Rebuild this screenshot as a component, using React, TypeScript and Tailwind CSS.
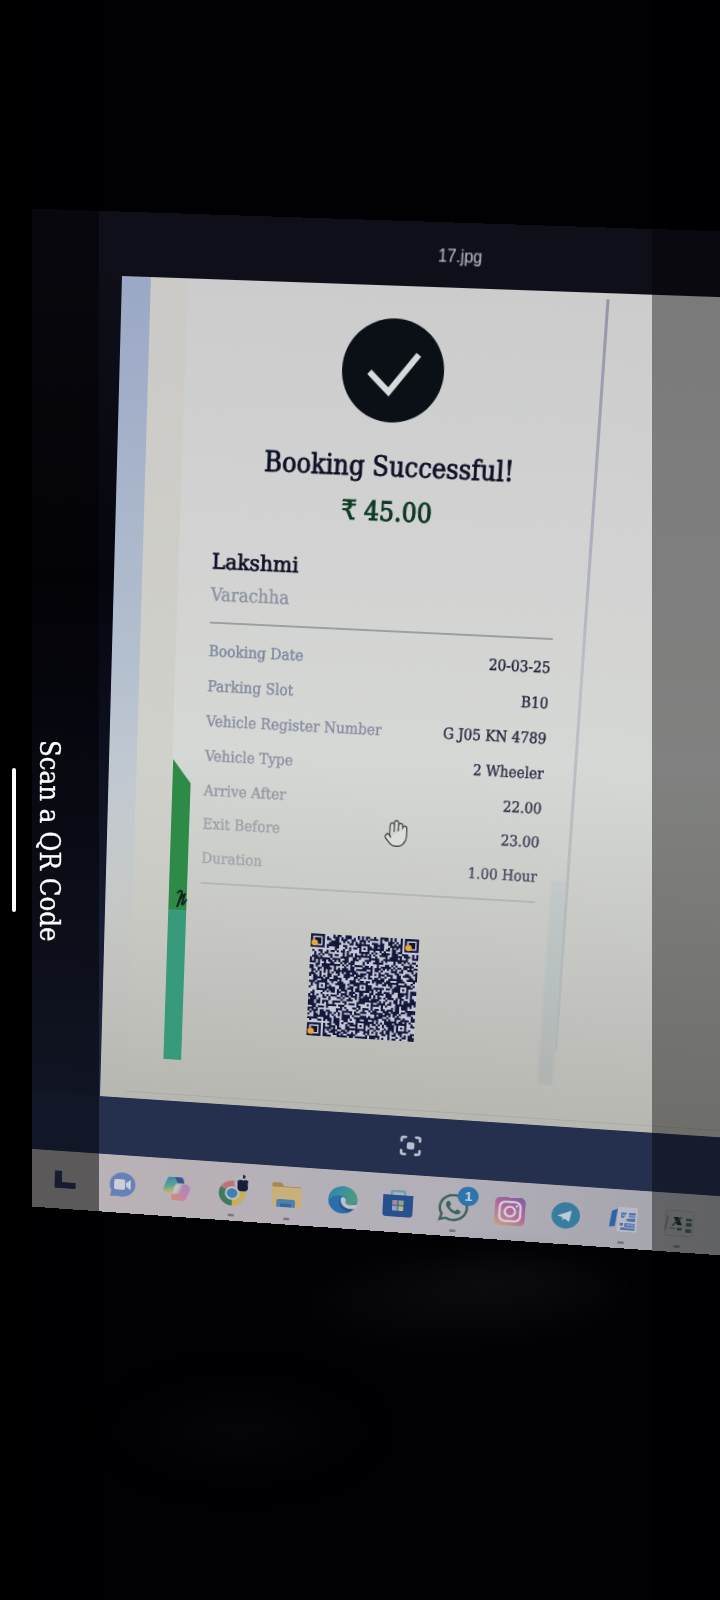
import React from "react";
import { Hand, Scan } from "lucide-react";
import { FaWhatsapp } from "react-icons/fa";

type Point = [number, number];

/* Where the corners of the picture shown on the laptop land in the camera view. */
const CORNERS: [Point, Point, Point, Point] = [
  [122, 276],
  [609, 293.2],
  [551, 1126],
  [100, 1096],
];

/* CSS matrix that carries a width x height rectangle, whose top left is at (ox, oy), onto four corners. */
function project(c: [Point, Point, Point, Point], width: number, height: number, ox: number, oy: number) {
  const [p0, p1, p2, p3] = c;
  const dx1 = p1[0] - p2[0];
  const dx2 = p3[0] - p2[0];
  const dy1 = p1[1] - p2[1];
  const dy2 = p3[1] - p2[1];
  const sx = p0[0] - p1[0] + p2[0] - p3[0];
  const sy = p0[1] - p1[1] + p2[1] - p3[1];
  const den = dx1 * dy2 - dx2 * dy1;
  const g0 = (sx * dy2 - dx2 * sy) / den;
  const h0 = (dx1 * sy - sx * dy1) / den;
  const a = (p1[0] - p0[0] + g0 * p1[0]) / width;
  const b = (p3[0] - p0[0] + h0 * p3[0]) / height;
  const d = (p1[1] - p0[1] + g0 * p1[1]) / width;
  const e = (p3[1] - p0[1] + h0 * p3[1]) / height;
  const g = g0 / width;
  const h = h0 / height;
  const c2 = p0[0] - a * ox - b * oy;
  const f2 = p0[1] - d * ox - e * oy;
  const i2 = 1 - g * ox - h * oy;
  const m = [a, d, 0, g, b, e, 0, h, 0, 0, 1, 0, c2, f2, 0, i2].map((v) => v / i2);
  m[10] = 1;
  return `matrix3d(${m.map((v) => v.toFixed(8)).join(",")})`;
}

const DETAILS = [
  { label: "Booking Date", value: "20-03-25", tone: "text-[#7b849c]", ink: "text-[#1d2137]" },
  { label: "Parking Slot", value: "B10", tone: "text-[#80889d]", ink: "text-[#20243c]" },
  { label: "Vehicle Register Number", value: "G J05 KN 4789", tone: "text-[#868da0]", ink: "text-[#252a42]" },
  { label: "Vehicle Type", value: "2 Wheeler", tone: "text-[#8b91a2]", ink: "text-[#2c3148]" },
  { label: "Arrive After", value: "22.00", tone: "text-[#9498a3]", ink: "text-[#31374e]" },
  { label: "Exit Before", value: "23.00", tone: "text-[#9c9fa7]", ink: "text-[#384059]" },
  { label: "Duration", value: "1.00 Hour", tone: "text-[#a1a3aa]", ink: "text-[#474d61]" },
];

const N = 53;

function qrPath() {
  let seed = 20325;
  const rnd = () => {
    seed = (seed * 1103515245 + 12345) % 2147483648;
    return seed / 2147483648;
  };
  const marks: Point[] = [[26, 6], [6, 26], [26, 26], [46, 26], [26, 46], [46, 46]];
  let out = "";
  for (let y = 0; y < N; y++) {
    for (let x = 0; x < N; x++) {
      let on = rnd() < 0.53;
      if ((x < 8 && y < 8) || (x > N - 9 && y < 8) || (x < 8 && y > N - 9)) on = false;
      for (const [mx, my] of marks) {
        const r = Math.max(Math.abs(x - mx), Math.abs(y - my));
        if (r <= 2) on = r !== 1;
      }
      if (on) out += `M${x} ${y}h1.05v1.05h-1.05z`;
    }
  }
  return out;
}

const QR = qrPath();

function QrCode() {
  const finders: Point[] = [[0, 0], [N - 7, 0], [0, N - 7]];
  return (
    <svg viewBox="0 0 53 53" className="size-[113px] blur-[.6px]">
      <rect width="53" height="53" fill="#c6c9d6" />
      <path d={QR} fill="#14163a" />
      {finders.map(([x, y]) => (
        <g key={`${x}-${y}`}>
          <rect x={x + 0.6} y={y + 0.6} width="5.8" height="5.8" fill="#c6c9d6" stroke="#14163a" strokeWidth="1.1" />
          <rect x={x + 2} y={y + 1.9} width="3.2" height="3.2" fill="#0e1130" />
          <circle cx={x + 2} cy={y + 4.6} r="1.6" fill="#e9a92e" />
        </g>
      ))}
    </svg>
  );
}

function TaskIcon({ children, open = false }: { children: React.ReactNode; open?: boolean }) {
  return (
    <div className="relative flex h-full w-[59.4px] shrink-0 items-center justify-center">
      <div className="blur-[.6px]">{children}</div>
      {open && <span className="absolute bottom-[5px] h-[3px] w-[7px] rounded-full bg-[#77757f]" />}
    </div>
  );
}

function Taskbar() {
  return (
    <div className="flex h-[67px] bg-linear-to-r from-[#b9b2b6] from-20% via-[#b2afb8] via-60% to-[#9c9fa6] pl-[138px]">
      <TaskIcon>
        <svg viewBox="0 0 32 32" className="size-8">
          <path d="M1 5h8v13h15v7H1z" fill="#2f3b5c" />
        </svg>
      </TaskIcon>
      <TaskIcon>
        <svg viewBox="0 0 32 32" className="size-8">
          <path d="M16 2a14 14 0 1 1-4 27.400l-9 .6 1-7A14 14 0 0 1 16 2z" fill="#6680b8" />
          <rect x="7" y="10" width="12" height="12" rx="2" fill="#cfced6" />
          <path d="M20 14l5-4v12l-5-4z" fill="#cfced6" />
        </svg>
      </TaskIcon>
      <TaskIcon>
        <svg viewBox="0 0 32 32" className="size-8">
          <defs>
            <linearGradient id="cpA" x1="0" y1="0" x2="0.3" y2="1">
              <stop offset="0" stopColor="#3a7eae" />
              <stop offset="0.55" stopColor="#56a593" />
              <stop offset="1" stopColor="#c9ba66" />
            </linearGradient>
            <linearGradient id="cpB" x1="1" y1="0" x2="0.2" y2="1">
              <stop offset="0" stopColor="#a487c2" />
              <stop offset="0.6" stopColor="#c583a8" />
              <stop offset="1" stopColor="#d08c78" />
            </linearGradient>
          </defs>
          <path d="M9 3h11c2 0 3 2 3.500 4l.500 3h-6c-3 0-4 2-5 5l-2 7H6c-4 0-5-4-4-7l3-8c.8-2.500 2-4 4-4z" fill="url(#cpA)" />
          <path d="M14 3h6c2 0 3 2 3.500 4l.500 3h-7z" fill="#34568f" />
          <path d="M23 30H12c-2 0-2-4-1.500-7H15c3 0 4-2 5-5l2-7h4c4 0 5 4 4 7l-3 8c-.8 2.500-2 4-4 4z" fill="url(#cpB)" />
          <path d="M14 13l5-2-3 9-4 2z" fill="#c7c0cf" />
        </svg>
      </TaskIcon>
      <TaskIcon open>
        <svg viewBox="0 0 32 32" className="size-8 overflow-visible">
          <path d="M16 17L3.500 9.800A14.500 14.500 0 0 1 28.600 9.800z" fill="#bd737c" />
          <path d="M16 17L3.500 9.800A14.500 14.500 0 0 0 16 31.500z" fill="#40795f" />
          <path d="M16 17L28.600 9.800A14.500 14.500 0 0 1 16 31.500z" fill="#c6af58" />
          <circle cx="16" cy="17" r="7.800" fill="#c6c3ce" />
          <circle cx="16" cy="17" r="5.800" fill="#3f7fb2" />
          <circle cx="27.500" cy="5" r="9.500" fill="#b8b4bb" />
          <path d="M21.500 2q5-2 6 0 2-2 5.500 0-1 4 0 9-2 4-6 3-4 1-5.500-3z" fill="#171c38" />
          <path d="M27-5l3 1-1 4-2-1z" fill="#22263a" />
        </svg>
      </TaskIcon>
      <TaskIcon open>
        <svg viewBox="0 0 32 32" className="size-8">
          <path d="M0 3q0-2 2-2h8l3 4h18v10H0z" fill="#a88a4e" />
          <path d="M0 6h30q2 0 2 2v21H0z" fill="#c9b07a" />
          <path d="M5 29v-7q0-2 2-2h16q2 0 2 2v7z" fill="#4a80b0" />
          <rect x="9" y="25" width="12" height="4" fill="#38699c" />
        </svg>
      </TaskIcon>
      <TaskIcon>
        <svg viewBox="0 0 32 32" className="size-8">
          <defs>
            <linearGradient id="edA" x1="0" y1="0" x2="1" y2="0.4">
              <stop offset="0" stopColor="#2f80ad" />
              <stop offset="0.5" stopColor="#3a929c" />
              <stop offset="1" stopColor="#4b9a7c" />
            </linearGradient>
          </defs>
          <circle cx="16" cy="16" r="15.500" fill="#2c6ea8" />
          <path d="M1 14C2 6 8 .5 16 .5S31.500 7 31.500 14c0 5-4 7.500-8 7.500-4 0-5-1.500-4-3 2-4-1-7.500-6-7.500-6 0-10 2-12.500 6z" fill="url(#edA)" />
          <path d="M12.500 15c0 7 6 11 17.500 8-2 4-5 6-8 7-6-2-12-8-9.500-15z" fill="#25598f" />
          <path d="M16 12.500c4 1 4 4 3 6 0 3 6 4 12.500 1.500l-1.500 5c-9 3-17-2-16-11z" fill="#c2c1cb" />
        </svg>
      </TaskIcon>
      <TaskIcon>
        <svg viewBox="0 0 32 32" className="size-8">
          <path d="M9 8V3.500Q9 1.500 11 1.500h10q2 0 2 2V8" fill="none" stroke="#67a0ad" strokeWidth="2.500" />
          <path d="M0 6h32v21q0 4-4 4H4q-4 0-4-4z" fill="#27508f" />
          <rect x="10" y="12" width="5.500" height="5.500" fill="#a98a8c" />
          <rect x="16.500" y="12" width="5.500" height="5.500" fill="#93a68b" />
          <rect x="10" y="18.500" width="5.500" height="5.500" fill="#86a9c6" />
          <rect x="16.500" y="18.500" width="5.500" height="5.500" fill="#c0b484" />
        </svg>
      </TaskIcon>
      <TaskIcon open>
        <div className="relative">
          <FaWhatsapp className="size-9 text-[#3c6458]" />
          <span className="absolute -top-[7px] -right-[8px] flex size-[22px] items-center justify-center rounded-full bg-[#2f74ac] font-['Liberation_Sans'] text-[15px] leading-none font-bold text-[#bfd3e6]">
            1
          </span>
        </div>
      </TaskIcon>
      <TaskIcon>
        <svg viewBox="0 0 32 32" className="size-8">
          <defs>
            <linearGradient id="ig" x1="0.8" y1="0" x2="0.2" y2="1">
              <stop offset="0" stopColor="#84609e" />
              <stop offset="0.5" stopColor="#b16a98" />
              <stop offset="1" stopColor="#c29c84" />
            </linearGradient>
          </defs>
          <rect width="32" height="32" rx="5" fill="url(#ig)" />
          <rect x="5" y="5" width="22" height="22" rx="6" fill="none" stroke="#d6cadb" strokeWidth="2.600" />
          <circle cx="16" cy="16" r="5.500" fill="none" stroke="#d6cadb" strokeWidth="2.600" />
          <circle cx="23" cy="9.500" r="1.300" fill="#d6cadb" />
        </svg>
      </TaskIcon>
      <TaskIcon>
        <svg viewBox="0 0 32 32" className="size-8">
          <circle cx="16" cy="16" r="15" fill="#387d9f" />
          <path d="M7 16.500l15-6.500-2 13-5.500-3.500-2 2.500v-4z" fill="#bccbd6" />
        </svg>
      </TaskIcon>
      <TaskIcon open>
        <svg viewBox="0 0 32 32" className="size-8">
          <rect x="10" y="2" width="21" height="28" rx="2" fill="#b7b9c4" />
          <path d="M4 7l6-3-2 20-6 1z" fill="#2f63a8" />
          <path d="M14 8h6l-3 6h-3zM22 8h7v5h-7zM19 15l10-1v4h-8zM13 20h4v3h-4zM18 20h11v8H14v-3h4z" fill="#5175ab" />
          <path d="M15 11h14M20 22h9M18 25h11" stroke="#a9b6cf" strokeWidth="1" />
        </svg>
      </TaskIcon>
      <TaskIcon open>
        <svg viewBox="0 0 32 32" className="size-8">
          <rect x="1.500" y="1.500" width="29" height="29" rx="3" fill="#a1a3a5" stroke="#909393" />
          <path d="M4 8L2 24M7 22h5" stroke="#747b7a" strokeWidth="1.500" />
          <path d="M10 9h5l4 9h-5z" fill="#173a30" />
          <path d="M18 9l-9 10" stroke="#35544b" strokeWidth="1.500" />
          <path d="M23 10h6v3h-6zM23 15h6v4h-6zM23 22h6v4h-6zM14 21h5v3h-5z" fill="#4c5d57" />
        </svg>
      </TaskIcon>
    </div>
  );
}

function Receipt() {
  return (
    <div className="flex h-[870px] w-[348px] flex-col font-['DejaVu_Serif_Condensed','DejaVu_Serif',serif] [font-stretch:condensed]">
      <svg viewBox="0 0 102 102" className="mt-8 mr-[2px] h-[103px] w-[101px] self-center" preserveAspectRatio="none">
        <circle cx="51" cy="51" r="51" fill="#0b1017" />
        <path d="M27.500 53l20 19L76 34.500" fill="none" stroke="#d6dadb" strokeWidth="6" />
      </svg>
      <h1 className="mt-[20px] h-[48px] self-center text-[27px] leading-[49px] whitespace-nowrap text-[#0e1026] [-webkit-text-stroke:.8px_#0e1026]">
        Booking Successful!
      </h1>
      <p className="h-[47px] scale-x-[.98] self-center text-[27px] leading-[43px] whitespace-nowrap text-[#0d3a25] [-webkit-text-stroke:1px_#0d3a25]">
        ₹ 45.00
      </p>
      <h2 className="mt-[16px] h-[36px] origin-left scale-x-[1.04] text-[22px] leading-[35px] text-[#0e1026] [-webkit-text-stroke:.7px_#0e1026]">
        Lakshmi
      </h2>
      <p className="h-[32px] origin-left scale-x-[.99] text-[19px] leading-[31px] text-[#8b93a0] [-webkit-text-stroke:.4px_#8b93a0]">
        Varachha
      </p>
      <hr className="mt-[12px] border-t-[2px] border-[#9a9fa2]" />
      <dl className="mt-[11px] flex flex-col text-[16px]">
        {DETAILS.map((row) => (
          <div key={row.label} className="flex h-[36.9px] justify-between leading-[36.9px] whitespace-nowrap">
            <dt className={`origin-left scale-x-[.985] [-webkit-text-stroke-width:.4px] ${row.tone}`}>{row.label}</dt>
            <dd className={`origin-right scale-x-[.96] [-webkit-text-stroke-width:.4px] ${row.ink}`}>{row.value}</dd>
          </div>
        ))}
      </dl>
      <hr className="mt-[7px] border-t-[2px] border-[#b3b6b5]" />
      <div className="mt-[47px] self-center">
        <QrCode />
      </div>
    </div>
  );
}

function LaptopScreen() {
  return (
    <div
      className="flex w-[960px] origin-top-left flex-col bg-linear-to-b from-[#0f0f1a] from-5% via-[#06060f] via-35% to-[#262f4f] to-95%"
      style={{ transform: project(CORNERS, 480, 870, 200, 63) }}
    >
      <header className="flex h-[63px] items-center bg-[#0f0f1a] pt-px pl-[509px]">
        <span className="scale-x-[.88] font-['Liberation_Sans',sans-serif] text-[18px] text-[#c3c4d0] blur-[.4px]">17.jpg</span>
      </header>
      <main className="relative ml-[200px] flex h-[870px] bg-linear-to-b from-[#cccccd] via-[#d6d8d5] via-55% to-[#b6b7b1]">
        <div className="w-[29px] bg-linear-to-b from-[#9ba8c6] via-[#b4bfce] via-45% to-[#c2c4c2]/0 to-80%" />
        <div className="w-[37px] bg-linear-to-b from-[#cbc9c4]/70 via-[#cbc9c0]/50 to-transparent" />
        <svg viewBox="0 0 20 870" className="h-[870px] w-5 overflow-visible">
          <path d="M1 493L20 518V658H1z" fill="#2e8a47" />
          <path d="M1 656H20V823H1z" fill="#379b7b" />
          <path d="M10 638q4-6 5-1l-5 16q4-14 9-15m-1 0l-3 11q0 2 2 0l3-5" fill="none" stroke="#0d2418" strokeWidth="2" />
        </svg>
        <div className="ml-[14px]">
          <Receipt />
        </div>
        <div className="mt-[601px] ml-[15px] h-[223px] w-[15px] bg-linear-to-b from-[#bcc5c7]/50 via-[#b3bdc0]/70 to-[#a9aeac]/60 blur-[1px]" />
        <div className="mt-[6px] h-[780px] w-[3px] bg-linear-to-b from-[#9496aa] via-[#bcc0c6] via-50% to-[#b2b7b5]" />
        <Hand
          className="absolute top-[543px] left-[288px] h-[33px] w-[26px] fill-[#dcdedc] text-[#4b4c50]"
          strokeWidth={1.2}
          preserveAspectRatio="none"
        />
        <div className="absolute bottom-[7px] left-[28px] h-px w-[720px] bg-[#9ea09b]/60" />
      </main>
      <footer className="flex h-[66px] items-center bg-[#252f4e] pl-[522px]">
        <span className="relative flex size-6 items-center justify-center">
          <Scan className="size-[26px] shrink-0 text-[#b9bdcd]" strokeWidth={2.6} />
          <span className="absolute size-[8px] rounded-[2px] bg-[#b9bdcd]" />
        </span>
      </footer>
      <Taskbar />
    </div>
  );
}

export default function App() {
  return (
    <div className="relative h-[1600px] w-[720px] overflow-hidden bg-black">
      <div className="ml-8 h-[1600px] w-[688px] overflow-hidden bg-[#010104]">
        <div className="-ml-8 h-[1600px] w-[960px]">
          <LaptopScreen />
        </div>
      </div>

      <div className="absolute top-[1258px] left-[250px] h-[110px] w-[370px] -rotate-6 rounded-[50%] bg-radial-[at_65%_30%] from-[#171517]/50 to-transparent to-60% blur-md" />
      <div className="absolute top-[1370px] left-[100px] h-[120px] w-[280px] bg-radial from-[#0a0909]/60 to-transparent to-70% blur-md" />

      <div className="absolute top-0 left-8 h-full w-[67px] bg-black/50" />
      <div className="absolute top-0 right-0 h-full w-[68px] bg-black/40" />
      <div className="absolute top-[768px] left-[12px] h-[144px] w-[4px] rounded-full bg-white" />
      <p className="absolute top-[740px] left-[29px] h-[202px] w-10 origin-top scale-y-[.975] font-['DejaVu_Serif_Condensed','DejaVu_Serif',serif] text-[28px] leading-10 whitespace-nowrap text-white [-webkit-text-stroke:.3px_#fff] [font-stretch:condensed] [writing-mode:vertical-rl]">
        Scan a QR Code
      </p>
    </div>
  );
}
